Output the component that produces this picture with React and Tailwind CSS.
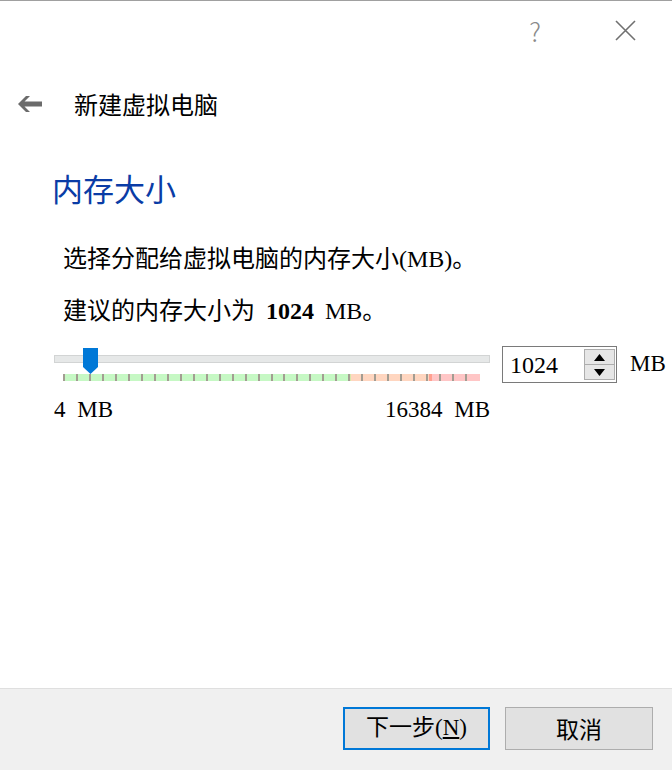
import React from "react";

const cjk = { fontFamily: '"Noto Sans CJK SC", "Noto Sans", sans-serif' };
const mixed = { fontFamily: '"Liberation Serif", "Noto Sans CJK SC", serif' };

const TICKS = Array.from({ length: 32 }, (_, i) => i);

const MemorySlider = () => {
  return (
    <div className="relative w-[436px] h-[37px]">
      <div className="mt-[9px] h-[8px] bg-[#e6e8e8] border border-[#d2d4d4]" />
      <div className="relative ml-[9px] mt-[11px] w-[417px] h-[7px] flex">
        <div className="w-[285px] bg-[#c6f8c4]" />
        <div className="w-[3px] bg-[#d8e6a8]" />
        <div className="w-[78px] bg-[#ffd6c0]" />
        <div className="w-[3px] bg-[#ffa090]" />
        <div className="flex-1 bg-[#ffc6c6]" />
        {TICKS.map((i) => (
          <div
            key={i}
            className="absolute top-0 w-[2px] h-[7px] bg-[#a39d92]"
            style={{ left: `${i * 12.97}px` }}
          />
        ))}
      </div>
      <svg
        className="absolute left-[29px] top-[2px]"
        width="15"
        height="26"
        viewBox="0 0 15 26"
      >
        <path d="M0 0 H15 V19 L7.5 26 L0 19 Z" fill="#0078d7" />
      </svg>
    </div>
  );
};

const SpinBox = () => {
  return (
    <div className="flex w-[115px] h-[37px] border border-[#7a7a7a] bg-white">
      <div className="flex-1 flex items-center pl-[7px] text-[24px] text-black" style={mixed}>
        1024
      </div>
      <div className="flex flex-col w-[31px] my-[2px] mr-[1px] border border-[#adadad] bg-[#e6e6e6]">
        <div className="flex-1 flex items-center justify-center border-b border-[#adadad]">
          <svg width="11" height="7" viewBox="0 0 11 7">
            <path d="M5.5 0 L11 7 H0 Z" fill="#000" />
          </svg>
        </div>
        <div className="flex-1 flex items-center justify-center">
          <svg width="11" height="7" viewBox="0 0 11 7">
            <path d="M0 0 H11 L5.5 7 Z" fill="#000" />
          </svg>
        </div>
      </div>
    </div>
  );
};

const App = () => {
  return (
    <div className="w-[672px] h-[770px] flex flex-col bg-white border-t border-[#a0a0a0]">
      <div className="h-[59px] flex items-center justify-end pr-[36px] gap-[74px]">
        <span className="text-[26px] text-[#8a8a8a] font-light" style={cjk}>
          ?
        </span>
        <svg width="21" height="21" viewBox="0 0 21 21">
          <path d="M1 1 L20 20 M20 1 L1 20" stroke="#707070" strokeWidth="1.6" />
        </svg>
      </div>

      <div className="mt-[29px] h-[30px] flex items-center">
        <svg className="ml-[17px]" width="26" height="18" viewBox="0 0 26 18">
          <path d="M1 9 L9 1 L13 1 L7.5 6.5 H25 V11.5 H7.5 L13 17 H9 Z" fill="#6b6b6b" />
        </svg>
        <span className="ml-[31px] text-[24px] text-black" style={cjk}>
          新建虚拟电脑
        </span>
      </div>

      <div className="flex-1 flex flex-col">
        <div className="mt-[49px] h-[40px] pl-[52px] flex items-center text-[31px] text-[#0a3ca6]" style={cjk}>
          内存大小
        </div>

        <div className="mt-[35px] h-[32px] pl-[63px] flex items-center text-[24px] text-black" style={mixed}>
          选择分配给虚拟电脑的内存大小(MB)。
        </div>

        <div className="mt-[20px] h-[32px] pl-[63px] flex items-center text-[24px] text-black whitespace-pre [word-spacing:5px]" style={mixed}>
          建议的内存大小为 <b className="font-bold">1024</b> MB。
        </div>

        <div className="mt-[19px] pl-[54px] flex items-center">
          <MemorySlider />
          <div className="ml-[12px]">
            <SpinBox />
          </div>
          <span className="ml-[13px] text-[23px] text-black" style={mixed}>
            MB
          </span>
        </div>

        <div className="mt-[15px] ml-[54px] w-[436px] h-[24px] flex items-center justify-between text-[23px] text-black [word-spacing:6px]" style={mixed}>
          <span>4 MB</span>
          <span>16384 MB</span>
        </div>
      </div>

      <div className="h-[82px] bg-[#f0f0f0] border-t border-[#dfdfdf] flex justify-end gap-[15px] pr-[19px] pt-[18px]">
        <button className="w-[147px] h-[43px] bg-[#e1e1e1] border-2 border-[#0078d7] text-[23px] text-black flex items-center justify-center" style={mixed}>
          下一步(<span className="underline underline-offset-2">N</span>)
        </button>
        <button className="w-[148px] h-[43px] bg-[#e1e1e1] border border-[#adadad] text-[23px] text-black flex items-center justify-center" style={cjk}>
          取消
        </button>
      </div>
    </div>
  );
};

export default App;
